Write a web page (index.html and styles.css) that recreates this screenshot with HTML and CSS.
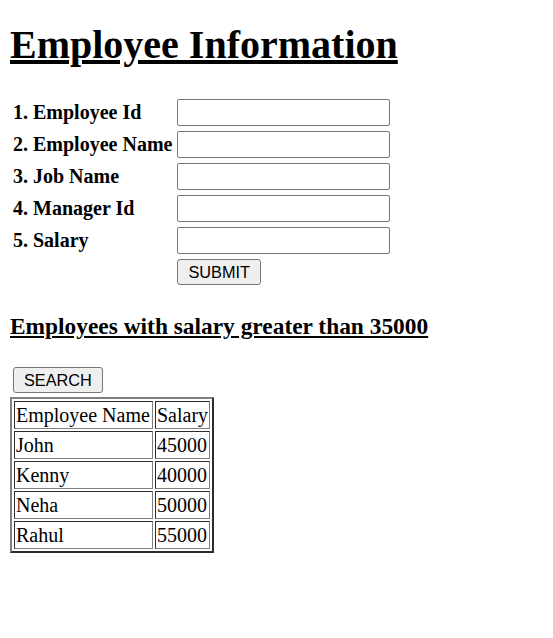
FILE: index.html
```html
<!DOCTYPE html>
<html>
<head>
<meta charset="utf-8">
<title>Employee Information</title>
<link rel="stylesheet" href="styles.css">
</head>
<body>
<h1 class="title">Employee Information</h1>
<form class="emp-form">
  <label class="lbl" for="eid">1. Employee Id</label>
  <input class="field" id="eid" type="text">
  <label class="lbl" for="ename">2. Employee Name</label>
  <input class="field" id="ename" type="text">
  <label class="lbl" for="job">3. Job Name</label>
  <input class="field" id="job" type="text">
  <label class="lbl" for="mid">4. Manager Id</label>
  <input class="field" id="mid" type="text">
  <label class="lbl" for="sal">5. Salary</label>
  <input class="field" id="sal" type="text">
  <span class="lbl"></span>
  <div class="btn-cell"><button type="button" class="btn">SUBMIT</button></div>
</form>
<h3 class="subtitle">Employees with salary greater than 35000</h3>
<div class="search-row"><button type="button" class="btn">SEARCH</button></div>
<table class="data">
  <tr><td class="name-col">Employee Name</td><td>Salary</td></tr>
  <tr><td class="name-col">John</td><td>45000</td></tr>
  <tr><td class="name-col">Kenny</td><td>40000</td></tr>
  <tr><td class="name-col">Neha</td><td>50000</td></tr>
  <tr><td class="name-col">Rahul</td><td>55000</td></tr>
</table>
</body>
</html>
```
FILE: styles.css
```css
html, body {
  background: #ffffff;
}
body {
  margin: 0;
  padding: 0 10px;
  font-family: "Liberation Serif", "Times New Roman", serif;
  font-size: 20px;
  color: #000000;
}
.title {
  margin: 22px 0 0;
  font-size: 40px;
  line-height: 46px;
  font-weight: bold;
  text-decoration: underline;
}
.emp-form {
  margin: 31px 0 0;
  padding-left: 3px;
  display: grid;
  grid-template-columns: max-content 213px;
  column-gap: 5px;
  row-gap: 5px;
  align-items: center;
}
.lbl {
  font-weight: bold;
  line-height: 23px;
}
.field {
  box-sizing: border-box;
  width: 213px;
  height: 27px;
  margin: 0;
  padding: 1px 2px;
  border: 1px solid #767676;
  border-radius: 2px;
  font-family: "Liberation Sans", Arial, sans-serif;
  font-size: 16px;
  background: #ffffff;
}
.btn-cell {
  display: flex;
}
.btn {
  box-sizing: border-box;
  height: 26px;
  margin: 0;
  padding: 0 10px;
  border: 1px solid #767676;
  border-radius: 3px;
  background: #efefef;
  color: #000000;
  font-family: "Liberation Sans", Arial, sans-serif;
  font-size: 16.3px;
  line-height: 18px;
}
.subtitle {
  margin: 28px 0 0;
  font-size: 23.4px;
  line-height: 27px;
  font-weight: bold;
  text-decoration: underline;
}
.search-row {
  margin-top: 27px;
  padding-left: 3px;
  display: flex;
}
.data {
  margin-top: 4px;
  border: 2px outset grey;
  border-spacing: 2px;
}
.data td {
  border: 1px inset grey;
  padding: 1px;
  line-height: 24px;
}
.data .name-col {
  width: 135px;
}
```
